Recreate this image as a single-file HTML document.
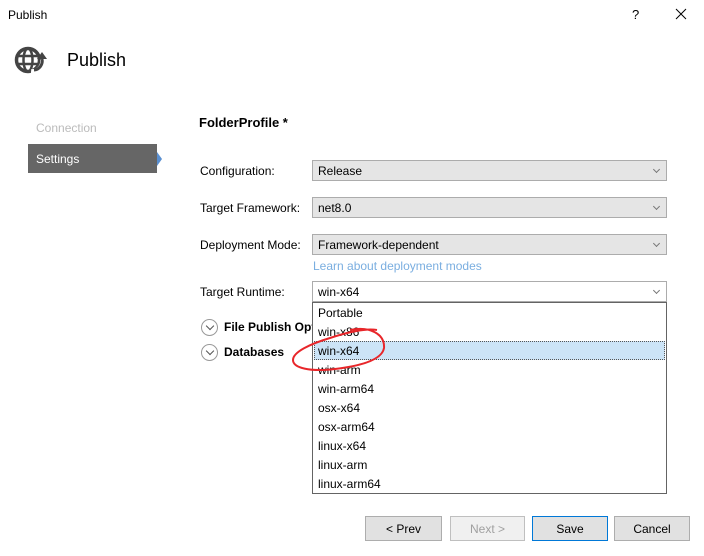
<!DOCTYPE html>
<html><head><meta charset="utf-8"><style>
*{margin:0;padding:0;box-sizing:border-box}
body{width:704px;height:556px;background:#fff;font-family:"Liberation Sans",sans-serif;font-size:12px;color:#000;position:relative;overflow:hidden}
.a{position:absolute;white-space:nowrap}
.dd{position:absolute;left:312px;width:355px;height:21px;background:#e5e5e5;border:1px solid #acacac;padding:3px 0 0 5px;font-size:12px}
.dd:after{content:"";position:absolute;right:7px;top:6px;width:4px;height:4px;border-right:1px solid #777;border-bottom:1px solid #777;transform:rotate(45deg)}
.lbl{position:absolute;left:200px;font-size:12px}
.btn{position:absolute;top:516px;height:25px;width:77px;background:#e1e1e1;border:1px solid #adadad;text-align:center;padding-top:5px;font-size:12px}
.circ{position:absolute;left:201px;width:17px;height:17px;border:1px solid #999;border-radius:50%}
.circ:after{content:"";position:absolute;left:5px;top:3px;width:5px;height:5px;border-right:1.3px solid #555;border-bottom:1.3px solid #555;transform:rotate(45deg)}
.it{position:absolute;left:318px;font-size:12px}
</style></head><body>
<div class="a" style="left:8px;top:8px;font-size:12px">Publish</div>
<div class="a" style="left:632px;top:7px;font-size:13px">?</div>
<svg class="a" style="left:675px;top:8px" width="12" height="12"><path d="M1 1L11 11M11 1L1 11" stroke="#000" stroke-width="1"/></svg>
<svg class="a" style="left:14px;top:45px" width="34" height="30" viewBox="0 0 34 30">
<circle cx="14" cy="15" r="11.5" fill="none" stroke="#444" stroke-width="3.5"/>
<ellipse cx="14" cy="15" rx="4.5" ry="11.5" fill="none" stroke="#444" stroke-width="2.5"/>
<path d="M3 11H25M3 19H25" stroke="#444" stroke-width="2.5"/>
<path d="M17 27A11 11 0 0 0 29 14" stroke="#fff" stroke-width="6" fill="none"/>
<path d="M20 25A9 9 0 0 0 28 14" stroke="#444" stroke-width="3" fill="none"/>
<path d="M23 14L28 7L33 14Z" fill="#444"/>
</svg>
<div class="a" style="left:67px;top:50px;font-size:18px">Publish</div>
<div class="a" style="left:36px;top:121px;color:#bbb">Connection</div>
<div class="a" style="left:28px;top:144px;width:129px;height:29px;background:#666;color:#fff;padding:8px 0 0 8px">Settings</div>
<div class="a" style="left:157px;top:152px;width:0;height:0;border-top:7px solid transparent;border-bottom:7px solid transparent;border-left:5px solid #5a8fd0"></div>
<div class="a" style="left:199px;top:115px;font-weight:bold;font-size:13px">FolderProfile *</div>
<div class="lbl" style="top:164px">Configuration:</div>
<div class="dd" style="top:160px">Release</div>
<div class="lbl" style="top:201px">Target Framework:</div>
<div class="dd" style="top:197px">net8.0</div>
<div class="lbl" style="top:238px">Deployment Mode:</div>
<div class="dd" style="top:234px">Framework-dependent</div>
<div class="a" style="left:313px;top:259px;color:#7aaee0">Learn about deployment modes</div>
<div class="lbl" style="top:285px">Target Runtime:</div>
<div class="dd" style="top:281px;background:#fff">win-x64</div>
<div class="circ" style="top:319px"></div>
<div class="a" style="left:224px;top:320px;font-weight:bold">File Publish Opti</div>
<div class="circ" style="top:344px"></div>
<div class="a" style="left:224px;top:345px;font-weight:bold">Databases</div>
<div class="a" style="left:312px;top:302px;width:355px;height:192px;background:#fff;border:1px solid #646464"></div>
<div class="a" style="left:314px;top:341px;width:351px;height:19px;background:#cce4f7;border:1px dotted #555"></div>
<div class="it" style="top:306px">Portable</div>
<div class="it" style="top:325px">win-x86</div>
<div class="it" style="top:344px">win-x64</div>
<div class="it" style="top:363px">win-arm</div>
<div class="it" style="top:382px">win-arm64</div>
<div class="it" style="top:401px">osx-x64</div>
<div class="it" style="top:420px">osx-arm64</div>
<div class="it" style="top:439px">linux-x64</div>
<div class="it" style="top:458px">linux-arm</div>
<div class="it" style="top:477px">linux-arm64</div>
<svg class="a" style="left:285px;top:320px" width="120" height="60">
<path d="M65 10C85 6 100 14 99 28C97 40 75 46 50 49C25 52 8 48 8 40C8 32 25 24 45 18C60 13 80 8 92 10" fill="none" stroke="#e8262a" stroke-width="2"/>
</svg>
<div class="btn" style="left:365px">&lt; Prev</div>
<div class="btn" style="left:450px;width:75px;background:#f0f0f0;border-color:#bfbfbf;color:#a0a0a0">Next &gt;</div>
<div class="btn" style="left:532px;width:76px;border-color:#0078d7">Save</div>
<div class="btn" style="left:614px;width:76px">Cancel</div>
</body></html>
